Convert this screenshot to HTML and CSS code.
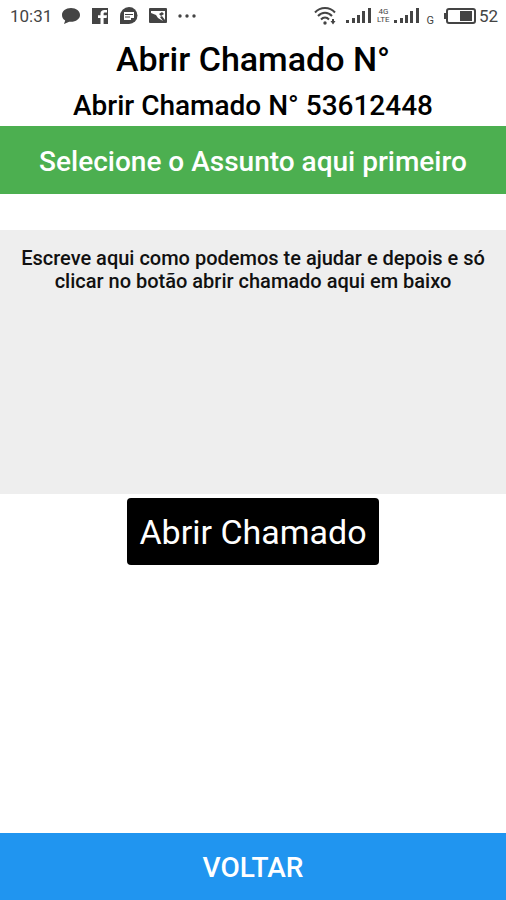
FILE: index.html
```html
<!DOCTYPE html>
<html lang="pt-BR">
<head>
<meta charset="utf-8">
<meta name="viewport" content="width=device-width, initial-scale=1">
<title>Abrir Chamado</title>
<link rel="stylesheet" href="styles.css">
</head>
<body>
<div class="status">
  <div class="status-group">
    <span class="clock">10:31</span>
    <svg width="20" height="18" viewBox="0 0 20 18"><path d="M10 1C4.800 1 1 4 1 8c0 2.300 1.200 4.300 3.200 5.500L3 17l5.200-2.300c6.200.6 10.800-2.400 10.800-6.700C19 4 15.200 1 10 1z" fill="#444"/></svg>
    <svg width="20" height="18" viewBox="-1 0 20 18"><path d="M1 1h16v16H1z" fill="#444"/><path d="M9.500 17v-6H7V8.300h2.500V6.500C9.500 4.200 11 3 13.500 3H16v2.500h-1.800c-1 0-1.600.4-1.600 1.200v1.600H16l-.4 2.700h-3v6z" fill="#fff"/></svg>
    <svg width="20" height="18" viewBox="0 0 20 18"><path d="M10 0a8.500 8.500 0 1 1 0 17H1V9a9 9 0 0 1 9-9z" fill="#444"/><path d="M5 5h10v6h-3v2H5z" fill="#fff"/><path d="M6 7.500h8M6 10h5" stroke="#444"/></svg>
    <svg width="20" height="18" viewBox="0 0 20 18"><rect x="1" y="1" width="18" height="15" rx="1" fill="#444"/><path d="M3 4h14v9l-3-4-2 1 3 4-5-3-2-3-5-2z" fill="#fff"/><path d="M11 7l3-2 2 2-3 2z" fill="#444"/></svg>
    <svg width="20" height="18" viewBox="0 0 20 18"><g fill="#444"><circle cx="3" cy="9" r="1.700"/><circle cx="10" cy="9" r="1.700"/><circle cx="17" cy="9" r="1.700"/></g></svg>
  </div>
  <div class="status-group signals">
    <svg width="22" height="20" viewBox="0 0 22 20"><g fill="none" stroke="#444" stroke-width="2"><path d="M1 6.500c5.500-6 14.500-6 20 0M4 10c4-4.400 10-4.400 14 0M7 13.500c2.300-2.600 5.700-2.600 8 0"/></g><circle cx="11" cy="17" r="1.700" fill="#444"/><path d="M18 13h2v2h1.500L19 18.500 16.500 15H18z" fill="#444"/></svg>
    <svg width="28" height="18" viewBox="0 0 28 18"><path d="M1 13h3v3H1zM7 11h3v5H7zM12 8h3v8h-3zM17 4h3v12h-3zM23 1h3v15h-3z" fill="#444"/></svg>
    <span class="network"><span>4G</span><span>LTE</span></span>
    <svg width="28" height="18" viewBox="0 0 28 18"><path d="M1 13h3v3H1zM7 11h3v5H7zM12 8h3v8h-3zM17 4h3v12h-3zM23 1h3v15h-3z" fill="#444"/></svg>
    <span class="carrier">G</span>
    <svg width="34" height="18" viewBox="0 0 34 18"><rect x="4" y="2" width="28" height="14" rx="2" fill="none" stroke="#444" stroke-width="2"/><path d="M1 6h2v6H1zM17 4h12v10H17z" fill="#444"/></svg>
    <span class="clock">52</span>
  </div>
</div>
<main class="screen">
  <h1 class="title">Abrir Chamado N°</h1>
  <h2 class="ticket">Abrir Chamado N° 53612448</h2>
  <button class="bar subject" type="button">Selecione o Assunto aqui primeiro</button>
  <textarea class="message" aria-label="Mensagem" placeholder="Escreve aqui como podemos te ajudar e depois e só clicar no botão abrir chamado aqui em baixo"></textarea>
  <button class="submit" type="button">Abrir Chamado</button>
</main>
<button class="bar back" type="button">VOLTAR</button>
</body>
</html>
```
FILE: styles.css
```css
* {
  box-sizing: border-box;
}

body {
  margin: 0;
  min-height: 100vh;
  display: flex;
  flex-direction: column;
  background: #fff;
  color: #000;
  font-family: Roboto, "Liberation Sans", sans-serif;
}

button,
textarea {
  border: 0;
  border-radius: 0;
  font-family: inherit;
}

.status {
  height: 32px;
  padding: 0 8px 0 10px;
  display: flex;
  justify-content: space-between;
  align-items: center;
  color: #444;
}

.status-group {
  display: flex;
  align-items: center;
  gap: 9px;
}

.signals .clock {
  margin-left: -7px;
}

.clock {
  font-size: 17px;
}

.network {
  display: flex;
  flex-direction: column;
  align-items: center;
  width: 12px;
  margin: 0 -5px;
  font-size: 8px;
  line-height: 8px;
}

.carrier {
  align-self: flex-end;
  margin-left: -4px;
  font-size: 11px;
  line-height: 10px;
}

.screen {
  flex: 1;
  display: flex;
  flex-direction: column;
}

.title,
.ticket {
  margin: 0;
  font-weight: 500;
  text-align: center;
}

.title {
  font-size: 34px;
  line-height: 54px;
}

.ticket {
  font-size: 28px;
  line-height: 40px;
}

.bar {
  width: 100%;
  height: 68px;
  padding: 2px 0 0;
  color: #fff;
  font-size: 28px;
  font-weight: 500;
}

.subject {
  background: #4caf50;
}

.message {
  width: 100%;
  height: 264px;
  margin-top: 36px;
  padding: 17px 20px;
  background: #eee;
  color: #111;
  font-size: 20px;
  font-weight: 500;
  line-height: 23px;
  text-align: center;
  resize: none;
}

.message::placeholder {
  color: #111;
  opacity: 1;
}

.submit {
  align-self: center;
  margin-top: 4px;
  padding: 14px 12px 12px;
  border-radius: 4px;
  background: #000;
  color: #fff;
  font-size: 34px;
  line-height: 41px;
}

.back {
  height: 67px;
  background: #2095f0;
}
```
